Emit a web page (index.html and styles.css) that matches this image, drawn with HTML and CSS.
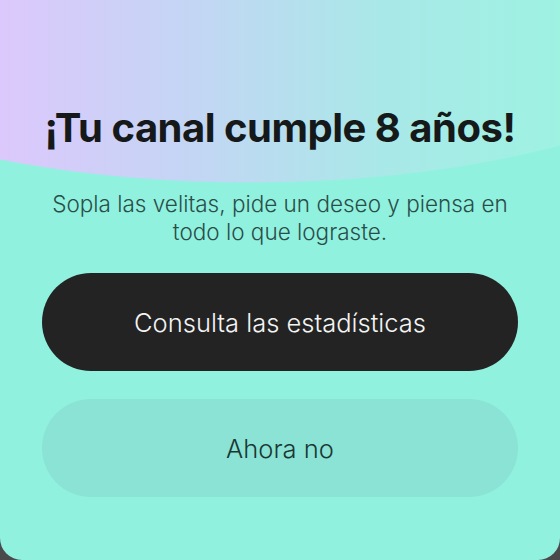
FILE: index.html
```html
<!DOCTYPE html>
<html lang="es">

<head>
  <meta charset="UTF-8">
  <meta name="viewport" content="width=device-width, initial-scale=1.0">
  <title>Aniversario del canal</title>
  <link rel="stylesheet" href="styles.css">
</head>

<body>
  <div class="sheet">
    <h1 class="title">¡Tu canal cumple 8 años!</h1>
    <p class="subtitle">Sopla las velitas, pide un deseo y piensa en todo lo que lograste.</p>

    <div class="actions">
      <button class="btn btn-primary">Consulta las estadísticas</button>
      <button class="btn btn-secondary">Ahora no</button>
    </div>
  </div>
</body>

</html>
```
FILE: styles.css
```css
* {
  margin: 0;
  padding: 0;
  box-sizing: border-box;
}

body {
  font-family: 'Inter', 'Noto Sans', sans-serif;
  background-color: #4a4a4a;
  width: 560px;
  height: 560px;
  overflow: hidden;
}

.sheet {
  height: 560px;
  border-radius: 0 0 22px 22px;
  display: flex;
  flex-direction: column;
  align-items: center;
  padding: 104px 42px 0;
  /* blob on top, aqua everywhere else */
  background:
    radial-gradient(515px 183px at 250px 0, transparent 99.4%, #90f1df 100%),
    linear-gradient(90deg, #dcc8fc 0%, #c3d6f4 35%, #a9e8e8 68%, #9ef2e2 100%);
}

.title {
  font-size: 40px;
  font-weight: 700;
  color: #16191a;
  letter-spacing: -0.5px;
  line-height: 48px;
  white-space: nowrap;
}

.subtitle {
  margin-top: 38px;
  font-size: 22.5px;
  font-weight: 300;
  line-height: 28px;
  color: #2b4d48;
  text-align: center;
  max-width: 470px;
}

.actions {
  margin-top: 27px;
  width: 100%;
  display: flex;
  flex-direction: column;
  gap: 28px;
}

.btn {
  height: 98px;
  border: none;
  border-radius: 49px;
  font-family: inherit;
  font-size: 25.5px;
  font-weight: 300;
}

.btn-primary {
  background: #232323;
  color: #f4f4f4;
}

.btn-secondary {
  background: #8ae3d5;
  color: #1a3833;
}
```
